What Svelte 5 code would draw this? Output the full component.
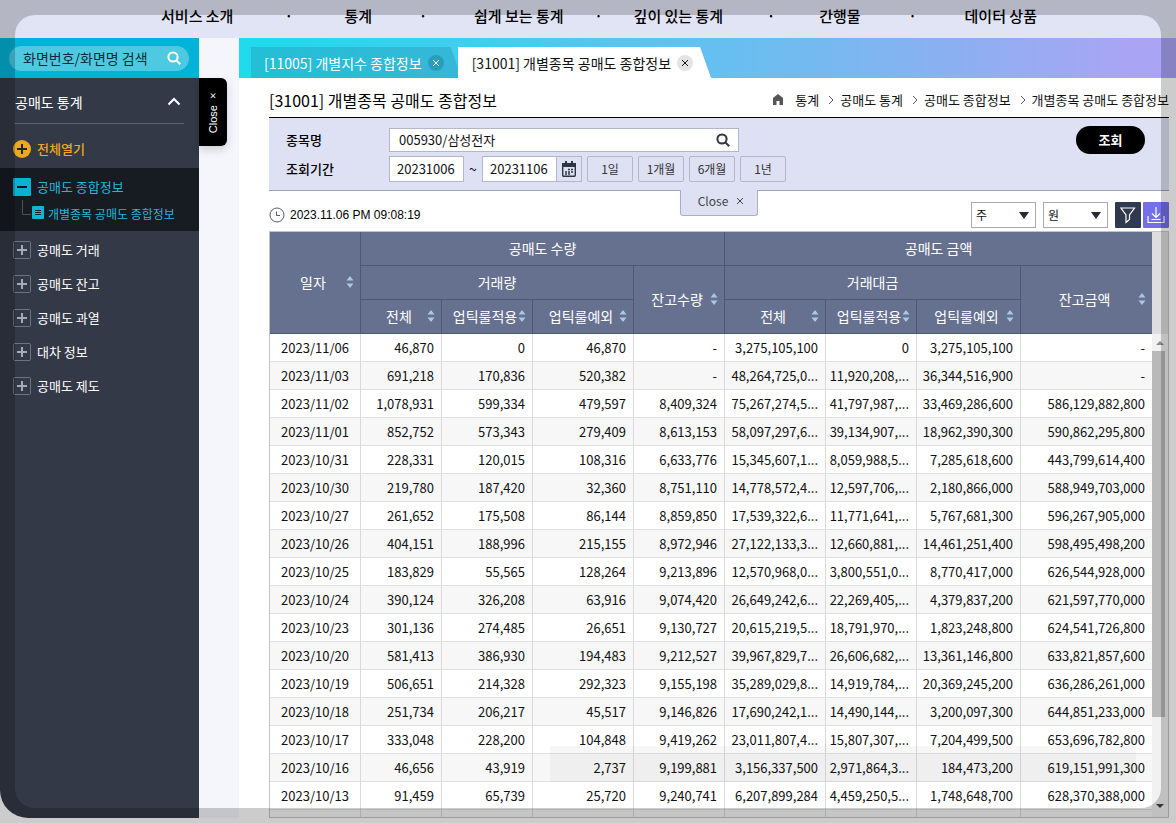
<script>
    let keyword = $state("");
    let stock = $state("005930/삼성전자");
    let fromDate = $state("20231006");
    let toDate = $state("20231106");

    // gap = space up to the next menu
    const menus = [
        { name: "서비스 소개", gap: 111 },
        { name: "통계", gap: 102 },
        { name: "쉽게 보는 통계", gap: 70 },
        { name: "깊이 있는 통계", gap: 96 },
        { name: "간행물", gap: 104 },
        { name: "데이터 상품", gap: 0 },
    ];

    const treeItems = ["공매도 거래", "공매도 잔고", "공매도 과열", "대차 정보", "공매도 제도"];
    const periods = ["1일", "1개월", "6개월", "1년"];
    const crumbs = ["통계", "공매도 통계", "공매도 종합정보", "개별종목 공매도 종합정보"];

    const rows = [
        ["2023/11/06", "46,870", "0", "46,870", "-", "3,275,105,100", "0", "3,275,105,100", "-"],
        ["2023/11/03", "691,218", "170,836", "520,382", "-", "48,264,725,0...", "11,920,208,...", "36,344,516,900", "-"],
        ["2023/11/02", "1,078,931", "599,334", "479,597", "8,409,324", "75,267,274,5...", "41,797,987,...", "33,469,286,600", "586,129,882,800"],
        ["2023/11/01", "852,752", "573,343", "279,409", "8,613,153", "58,097,297,6...", "39,134,907,...", "18,962,390,300", "590,862,295,800"],
        ["2023/10/31", "228,331", "120,015", "108,316", "6,633,776", "15,345,607,1...", "8,059,988,5...", "7,285,618,600", "443,799,614,400"],
        ["2023/10/30", "219,780", "187,420", "32,360", "8,751,110", "14,778,572,4...", "12,597,706,...", "2,180,866,000", "588,949,703,000"],
        ["2023/10/27", "261,652", "175,508", "86,144", "8,859,850", "17,539,322,6...", "11,771,641,...", "5,767,681,300", "596,267,905,000"],
        ["2023/10/26", "404,151", "188,996", "215,155", "8,972,946", "27,122,133,3...", "12,660,881,...", "14,461,251,400", "598,495,498,200"],
        ["2023/10/25", "183,829", "55,565", "128,264", "9,213,896", "12,570,968,0...", "3,800,551,0...", "8,770,417,000", "626,544,928,000"],
        ["2023/10/24", "390,124", "326,208", "63,916", "9,074,420", "26,649,242,6...", "22,269,405,...", "4,379,837,200", "621,597,770,000"],
        ["2023/10/23", "301,136", "274,485", "26,651", "9,130,727", "20,615,219,5...", "18,791,970,...", "1,823,248,800", "624,541,726,800"],
        ["2023/10/20", "581,413", "386,930", "194,483", "9,212,527", "39,967,829,7...", "26,606,682,...", "13,361,146,800", "633,821,857,600"],
        ["2023/10/19", "506,651", "214,328", "292,323", "9,155,198", "35,289,029,8...", "14,919,784,...", "20,369,245,200", "636,286,261,000"],
        ["2023/10/18", "251,734", "206,217", "45,517", "9,146,826", "17,690,242,1...", "14,490,144,...", "3,200,097,300", "644,851,233,000"],
        ["2023/10/17", "333,048", "228,200", "104,848", "9,419,262", "23,011,807,4...", "15,807,307,...", "7,204,499,500", "653,696,782,800"],
        ["2023/10/16", "46,656", "43,919", "2,737", "9,199,881", "3,156,337,500", "2,971,864,3...", "184,473,200", "619,151,991,300"],
        ["2023/10/13", "91,459", "65,739", "25,720", "9,240,741", "6,207,899,284", "4,459,250,5...", "1,748,648,700", "628,370,388,000"],
    ];
</script>

{#snippet sortIcon()}
    <svg class="sort" width="8" height="12" viewBox="0 0 8 12"><path d="M4 0L7.5 4.5H.5zM4 12L.5 7.5h7z" fill="#a9c6e2" /></svg>
{/snippet}

{#snippet cross()}
    <svg width="8" height="8" viewBox="0 0 8 8"><path d="M1 1l6 6M7 1L1 7" stroke="currentColor" fill="none" /></svg>
{/snippet}

{#snippet sortHead(label)}
    <button class="sort-btn"><span>{label}</span>{@render sortIcon()}</button>
{/snippet}

<div class="page">
    <nav class="gnb">
        {#each menus as menu}
            <a href="#menu">{menu.name}</a>
            {#if menu.gap}
                <span class="dot" style="width: {menu.gap}px">·</span>
            {/if}
        {/each}
    </nav>

    <div class="body">
        <aside>
            <div class="search-bar">
                <div class="pill">
                    <input bind:value={keyword} placeholder="화면번호/화면명 검색" aria-label="화면 검색" />
                    <button aria-label="검색">
                        <svg width="14" height="14" viewBox="0 0 14 14" fill="none" stroke="#fff" stroke-width="2"><circle cx="6" cy="6" r="4.6" /><path d="M9.4 9.4L13.2 13.2" /></svg>
                    </button>
                </div>
            </div>

            <div class="side">
                <button class="side-title">
                    <span>공매도 통계</span>
                    <svg width="14" height="9" viewBox="0 0 14 9"><path d="M1.5 7.5L7 2l5.500 5.500" fill="none" stroke="#fff" stroke-width="2" /></svg>
                </button>
                <button class="open-all">
                    <svg width="18" height="18" viewBox="0 0 18 18"><circle cx="9" cy="9" r="9" fill="#eba91f" /><path d="M9 4v10M4 9h10" stroke="#20252f" stroke-width="2" /></svg>
                    전체열기
                </button>
                <div class="tree-active">
                    <a class="parent" href="#total">
                        <svg width="18" height="18" viewBox="0 0 18 18"><rect width="18" height="18" rx="1" fill="#06b1d6" /><path d="M4 9h10" stroke="#0d1420" stroke-width="2" /></svg>
                        공매도 종합정보
                    </a>
                    <a class="child" href="#stock">
                        <svg width="22" height="20" viewBox="0 0 22 20">
                            <path d="M.5 0v14.500H9" fill="none" stroke="#4b525e" />
                            <rect x="10" y="6" width="12" height="13" rx="1" fill="#0cb6da" />
                            <path d="M13 10.500h6M13 12.500h6M13 14.500h6" stroke="#10202c" />
                        </svg>
                        개별종목 공매도 종합정보
                    </a>
                </div>
                <ul class="tree">
                    {#each treeItems as item}
                        <li>
                            <a href="#tree">
                                <svg width="18" height="18" viewBox="0 0 18 18"><rect x=".5" y=".5" width="17" height="17" rx="1" fill="none" stroke="#6f7580" /><path d="M9 4v10M4 9h10" stroke="#a6abb4" stroke-width="2" /></svg>
                                {item}
                            </a>
                        </li>
                    {/each}
                </ul>
            </div>
        </aside>

        <div class="gutter">
            <button class="side-close"><span>Close ×</span></button>
        </div>

        <main>
            <div class="tabs">
                <div class="tab">
                    <span>[11005] 개별지수 종합정보</span>
                    <button aria-label="닫기">{@render cross()}</button>
                </div>
                <div class="tab on">
                    <span>[31001] 개별종목 공매도 종합정보</span>
                    <button aria-label="닫기">{@render cross()}</button>
                </div>
            </div>

            <div class="content">
                <header class="title">
                    <h1>[31001] 개별종목 공매도 종합정보</h1>
                    <div class="crumbs">
                        <svg class="home" width="12" height="11" viewBox="0 0 12 11"><path d="M6 0L11 4v7H7.500V7h-3v4H1V4z" fill="#555" /></svg>
                        {#each crumbs as crumb, i}
                            {#if i > 0}
                                <svg class="arrow" width="6" height="10" viewBox="0 0 6 10"><path d="M1 1l4 4-4 4" fill="none" stroke="#555" /></svg>
                            {/if}
                            <span>{crumb}</span>
                        {/each}
                    </div>
                </header>

                <form class="filter" onsubmit={(e) => e.preventDefault()}>
                    <div class="fields">
                        <label for="stock">종목명</label>
                        <div class="box stock">
                            <input id="stock" bind:value={stock} />
                            <button type="button" aria-label="종목 검색">
                                <svg width="14" height="14" viewBox="0 0 14 14" fill="none" stroke="#2e3442" stroke-width="2"><circle cx="6" cy="6" r="4.600" /><path d="M9.400 9.400L13.200 13.200" /></svg>
                            </button>
                        </div>
                        <label for="from">조회기간</label>
                        <div class="period">
                            <div class="box date"><input id="from" bind:value={fromDate} /></div>
                            <span class="tilde">~</span>
                            <div class="box date">
                                <input bind:value={toDate} aria-label="종료일" />
                            </div>
                            <button type="button" class="cal" aria-label="달력">
                                <svg width="14" height="16" viewBox="0 0 14 16">
                                    <rect x=".7" y="2.700" width="12.600" height="12.600" rx="1" fill="none" stroke="#2e3442" stroke-width="1.400" />
                                    <path d="M0 2h14v4H0zM3 0h2v3H3zM9 0h2v3H9z" fill="#2e3442" />
                                    <path d="M6 8.500h2M9 8.500h2M3 11h2M6 11h2M9 11h2M3 13h2M6 13h2" stroke="#2e3442" stroke-width="1.300" />
                                </svg>
                            </button>
                            {#each periods as p}
                                <button type="button" class="range">{p}</button>
                            {/each}
                        </div>
                    </div>
                    <button class="submit">조회</button>
                    <button type="button" class="fold">Close {@render cross()}</button>
                </form>

                <div class="toolbar">
                    <svg width="16" height="16" viewBox="0 0 16 16" fill="none" stroke="#555b66"><circle cx="8" cy="8" r="7" /><path d="M7.500 4.500v4H11" /></svg>
                    <span class="time">2023.11.06 PM 09:08:19</span>
                    <select aria-label="수량 단위"><option>주</option></select>
                    <select aria-label="금액 단위"><option>원</option></select>
                    <button class="icon-btn" aria-label="필터">
                        <svg width="16" height="18" viewBox="0 0 16 18"><path d="M1 2h13.500L9.500 9v4.500L6 16.500V9z" fill="none" stroke="#fff" stroke-width="1.200" /></svg>
                    </button>
                    <button class="icon-btn down" aria-label="다운로드">
                        <svg width="18" height="18" viewBox="0 0 18 18" fill="none" stroke="#fff" stroke-width="1.200"><path d="M9 1v10M5 7.500l4 4 4-4M1 10v6.500h16V10M4.500 13.500h9" /></svg>
                    </button>
                </div>

                <div class="grid">
                    <table>
                        <colgroup>
                            <col class="w91" /><col class="w81" /><col class="w91" /><col class="w101" /><col class="w91" />
                            <col class="w101" /><col class="w91" /><col class="w104" /><col />
                        </colgroup>
                        <thead>
                            <tr>
                                <th rowspan="3">{@render sortHead("일자")}</th>
                                <th colspan="4">공매도 수량</th>
                                <th colspan="4">공매도 금액</th>
                            </tr>
                            <tr>
                                <th colspan="3">거래량</th>
                                <th rowspan="2">{@render sortHead("잔고수량")}</th>
                                <th colspan="3">거래대금</th>
                                <th rowspan="2">{@render sortHead("잔고금액")}</th>
                            </tr>
                            <tr>
                                {#each ["전체", "업틱룰적용", "업틱룰예외", "전체", "업틱룰적용", "업틱룰예외"] as head}
                                    <th>{@render sortHead(head)}</th>
                                {/each}
                            </tr>
                        </thead>
                        <tbody>
                            {#each rows as row}
                                <tr>
                                    {#each row as cell}
                                        <td>{cell}</td>
                                    {/each}
                                </tr>
                            {/each}
                            <tr class="rest">
                                {#each rows[0] as _}
                                    <td></td>
                                {/each}
                            </tr>
                        </tbody>
                    </table>
                    <div class="scroll">
                        <div class="scroll-head"></div>
                        <div class="scroll-btn">
                            <svg width="8" height="4" viewBox="0 0 8 4"><path d="M4 0l4 4H0z" fill="#8a8a8a" /></svg>
                        </div>
                        <div class="track"><div class="thumb"></div></div>
                        <div class="scroll-btn">
                            <svg width="8" height="4" viewBox="0 0 8 4"><path d="M0 0h8L4 4z" fill="#444" /></svg>
                        </div>
                    </div>
                    <div class="shade"></div>
                </div>
            </div>
        </main>
    </div>
    <div class="frame"></div>
</div>

<style>
    :global(body) {
        background: #fff;
    }
    * {
        box-sizing: border-box;
    }
    .page {
        font-family: "Noto Sans CJK KR", "Noto Sans", sans-serif;
        font-size: 14px;
        line-height: 20px;
        color: #111;
        overflow: hidden;
        padding-bottom: 5px;
    }
    button,
    input,
    select {
        font: inherit;
        color: inherit;
        margin: 0;
        padding: 0;
        border: none;
        background: none;
    }
    button {
        cursor: pointer;
        display: flex;
        align-items: center;
        justify-content: center;
    }
    input {
        min-width: 0;
        outline: none;
    }
    a {
        color: inherit;
        text-decoration: none;
    }
    svg {
        flex: none;
    }

    .gnb {
        height: 38px;
        padding: 0 0 6px 22px;
        display: flex;
        align-items: center;
        justify-content: center;
        background: #e1e4f4;
        font-size: 15px;
        font-weight: 500;
        color: #000;
        white-space: nowrap;
    }
    .dot {
        text-align: center;
    }

    .body {
        display: flex;
    }
    aside {
        width: 199px;
        flex: none;
        display: flex;
        flex-direction: column;
    }
    .search-bar {
        height: 40px;
        padding: 8px 10px 7px 9px;
        background: #02b3d8;
    }
    .pill {
        height: 25px;
        display: flex;
        align-items: center;
        padding: 0 8px 2px 14px;
        border-radius: 13px;
        background: #4dcae2;
    }
    .pill input {
        flex: 1;
    }
    .pill input::placeholder {
        color: #102a35;
        opacity: 1;
    }
    .side {
        flex: 1;
        background: #333947;
        color: #fff;
        border-radius: 0 0 0 28px;
    }
    .side-title {
        width: 170px;
        height: 46px;
        margin-left: 14px;
        padding: 2px 3px 0 1px;
        justify-content: space-between;
        border-bottom: 1px solid #5a606c;
    }
    .open-all {
        height: 44px;
        padding: 6px 0 0 13px;
        gap: 6px;
        font-size: 13px;
        font-weight: 500;
        color: #eba91f;
    }
    .tree-active {
        height: 63px;
        background: #171b22;
        color: #1fb9dc;
    }
    .parent {
        display: flex;
        align-items: center;
        gap: 6px;
        height: 28px;
        padding: 9px 0 0 13px;
        font-size: 13px;
    }
    .child {
        display: flex;
        align-items: center;
        gap: 4px;
        padding-left: 22px;
        height: 35px;
        font-size: 12px;
        white-space: nowrap;
    }
    .child svg {
        margin-bottom: 8px;
    }
    .tree {
        list-style: none;
        margin: 0;
        padding: 2px 0 0 13px;
        font-size: 13px;
    }
    .tree a {
        display: flex;
        align-items: center;
        gap: 6px;
        height: 34px;
    }

    .gutter {
        width: 40px;
        flex: none;
        background: #f5f6fc;
        padding-top: 40px;
    }
    .side-close {
        width: 28px;
        height: 68px;
        background: #000;
        color: #fff;
        border-radius: 0 6px 6px 0;
        box-shadow: 0 4px 8px rgba(0, 0, 0, 0.15);
        font-family: "Liberation Sans", sans-serif;
        font-size: 11px;
    }
    .side-close span {
        writing-mode: vertical-rl;
        transform: rotate(180deg);
    }

    main {
        flex: 1;
        min-width: 0;
    }
    .tabs {
        height: 40px;
        display: flex;
        align-items: flex-end;
        padding-left: 12px;
        background: linear-gradient(90deg, #1edbec, #6bbdf0 55%, #a9a4f4 95%);
        white-space: nowrap;
    }
    .tab {
        display: flex;
        align-items: center;
        gap: 6px;
        height: 31px;
        padding: 0 18px 0 13px;
        background: rgba(40, 130, 165, 0.3);
        color: #fff;
        clip-path: polygon(0 0, calc(100% - 11px) 0, 100% 100%, 0 100%);
    }
    .tab.on {
        margin-left: -4px;
        background: #fff;
        color: #111;
        padding: 0 18px 0 14px;
    }
    .tab button {
        width: 16px;
        height: 16px;
        border-radius: 50%;
        background: #2a9eb9;
    }
    .tab.on button {
        background: #e4e4e4;
    }

    .content {
        padding: 0 7px 0 30px;
    }
    .title {
        height: 40px;
        padding-top: 4px;
        display: flex;
        align-items: center;
        justify-content: space-between;
        border-bottom: 1px solid #000;
        white-space: nowrap;
    }
    h1 {
        margin: 0;
        font-size: 16px;
        font-weight: 400;
        color: #000;
    }
    .crumbs {
        display: flex;
        align-items: center;
        font-size: 13px;
    }
    .home {
        margin-right: 11px;
    }
    .arrow {
        margin: 0 6px 0 9px;
    }

    .filter {
        display: flex;
        justify-content: space-between;
        align-items: flex-start;
        height: 73px;
        padding: 8px 24px 0 17px;
        background: #dee1f3;
        border-bottom: 1px solid #9ba2bb;
        position: relative;
    }
    .fields {
        display: grid;
        grid-template-columns: 103px 1fr;
        row-gap: 4px;
        padding-top: 2px;
        align-items: center;
    }
    label {
        font-size: 13px;
        font-weight: 500;
        color: #000;
    }
    .box {
        display: flex;
        align-items: center;
        background: #fff;
        border: 1px solid #b3b7c6;
        font-size: 13px;
    }
    .stock {
        width: 350px;
        height: 24px;
        padding: 0 8px 0 9px;
    }
    .stock input {
        flex: 1;
    }
    .period {
        display: flex;
        align-items: center;
    }
    .date {
        width: 75px;
        height: 26px;
        padding-left: 7px;
    }
    .date input {
        width: 100%;
    }
    .tilde {
        width: 18px;
        text-align: center;
    }
    .cal {
        width: 25px;
        height: 26px;
        border: 1px solid #b3b7c6;
        border-left: none;
    }
    .range {
        width: 46px;
        height: 26px;
        margin-left: 5px;
        border: 1px solid #b3b7c6;
        border-radius: 2px;
        font-size: 12px;
        color: #333;
    }
    .submit {
        width: 69px;
        height: 28px;
        border-radius: 14px;
        background: #000;
        color: #fff;
        font-size: 13px;
        font-weight: 700;
    }
    .fold {
        position: absolute;
        top: 72px;
        left: 50%;
        width: 78px;
        height: 26px;
        margin-left: -39px;
        gap: 8px;
        padding: 0 0 4px 4px;
        background: #dee1f3;
        border: 1px solid #a9afc8;
        border-top: none;
        border-radius: 0 0 3px 3px;
        font-size: 12px;
        color: #444;
    }

    .toolbar {
        display: flex;
        align-items: center;
        height: 40px;
        padding-top: 8px;
    }
    .time {
        flex: 1;
        margin-left: 5px;
        font-family: "Liberation Sans", sans-serif;
        font-size: 12px;
        color: #000;
    }
    select {
        width: 65px;
        height: 26px;
        margin-right: 7px;
        padding-left: 4px;
        border: 1px solid #aaa;
        appearance: none;
        background: #fff url("data:image/svg+xml,%3Csvg xmlns='http://www.w3.org/2000/svg' width='10' height='7'%3E%3Cpath d='M0 0h10L5 7z' fill='%23222a38'/%3E%3C/svg%3E") no-repeat right 6px center;
        font-size: 12px;
    }
    .icon-btn {
        width: 26px;
        height: 26px;
        border-radius: 1px;
        background: #2f3a50;
    }
    .down {
        margin-left: 2px;
        background: #7370ea;
    }

    .grid {
        display: flex;
        position: relative;
        border: 1px solid #c4c4c4;
        border-right-width: 0;
    }
    table {
        flex: 1;
        width: 100%;
        min-width: 0;
        table-layout: fixed;
        border-collapse: separate;
        border-spacing: 0;
    }
    .w81 {
        width: 81px;
    }
    .w91 {
        width: 91px;
    }
    .w101 {
        width: 101px;
    }
    .w104 {
        width: 104px;
    }
    th {
        height: 34px;
        padding: 0 0 2px;
        background: #66718f;
        color: #fff;
        font-weight: 400;
        border-right: 1px solid #4b5876;
        border-bottom: 1px solid #4b5876;
    }
    th[colspan="4"]:last-child,
    tr:nth-child(2) th:last-child {
        border-right: none;
    }
    .sort-btn {
        width: 100%;
        padding: 0 6px 0 10px;
        white-space: nowrap;
    }
    .sort-btn span {
        flex: 1;
        min-width: 0;
        text-align: center;
    }
    td {
        height: 28px;
        padding: 0 7px 0 0;
        font-size: 13px;
        text-align: right;
        white-space: nowrap;
        border-right: 1px solid #d9d9d9;
        border-bottom: 1px solid #e0e0e0;
    }
    td:first-child {
        padding-right: 0;
        text-align: center;
    }
    td:last-child {
        border-right: none;
    }
    tbody tr:nth-child(even) td {
        background: #f7f7f7;
    }
    .rest td {
        height: 7px;
        border-bottom: none;
    }
    .scroll {
        width: 17px;
        flex: none;
        display: flex;
        flex-direction: column;
        padding-bottom: 3px;
        background: #f1f1f1;
        border-right: 1px solid #c4c4c4;
    }
    .scroll-head {
        height: 102px;
        background: #dedede;
    }
    .scroll-btn {
        height: 17px;
        display: flex;
        align-items: center;
        justify-content: center;
    }
    .track {
        flex: 1;
    }
    .thumb {
        width: 13px;
        height: 82%;
        background: #b9b9b9;
    }
    .shade {
        position: absolute;
        right: 33px;
        bottom: 35px;
        width: 586px;
        height: 36px;
        background: rgba(0, 0, 0, 0.03);
        pointer-events: none;
    }

    .frame {
        position: fixed;
        inset: 15px;
        border-radius: 20px;
        box-shadow: 0 0 0 40px rgba(0, 0, 0, 0.2);
        pointer-events: none;
    }
</style>
